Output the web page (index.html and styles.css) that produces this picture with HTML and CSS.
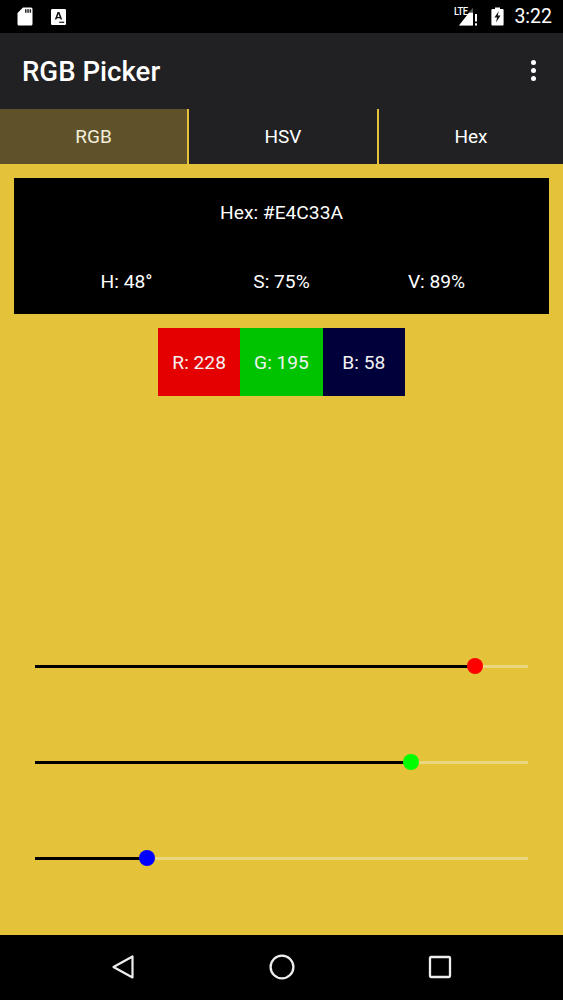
FILE: index.html
```html
<!DOCTYPE html>
<html lang="en">
<head>
<meta charset="utf-8">
<title>RGB Picker</title>
<link rel="stylesheet" href="styles.css">
</head>
<body>
<div class="screen">
  <header class="status">
    <div class="status-left">
      <svg class="ic-sd" viewBox="0 0 16 19"><path d="M6 0.5H14a1.5 1.5 0 0 1 1.5 1.5v15a1.5 1.5 0 0 1-1.5 1.5H2a1.5 1.5 0 0 1-1.5-1.5V6z" fill="#fff"/><path d="M8 2.3h1.5v3.4H8zM10.3 2.3h1.5v3.4h-1.5zM12.6 2.3h1.5v3.4h-1.5z" fill="#222"/></svg>
      <svg class="ic-a" viewBox="0 0 15 16"><rect x="0" y="0" width="15" height="16" rx="1.2" fill="#fff"/><path d="M3.8 10.6 6.6 3h1.8l2.8 7.6H9.6L9.1 9.2H5.9l-.5 1.4zM6.4 7.9h2.2L7.5 4.7z" fill="#111"/><rect x="8.2" y="12.6" width="5" height="1.4" fill="#333"/></svg>
    </div>
    <div class="status-right">
      <div class="signal">
        <span class="lte">LTE</span>
        <svg class="ic-signal" viewBox="0 0 20 19"><path d="M0 18.5 14 0.5V18.5z" fill="#555"/><path d="M0 18.5 10 5.7H14V18.5z" fill="#fff"/><rect x="16" y="7" width="2" height="7.5" fill="#fff"/><rect x="16" y="16.3" width="2" height="2.2" fill="#fff"/></svg>
      </div>
      <svg class="ic-batt" viewBox="0 0 13 19"><path d="M4 0.5h5v1.5h2.6a1 1 0 0 1 1 1v14.5a1 1 0 0 1-1 1H1.4a1 1 0 0 1-1-1V3a1 1 0 0 1 1-1H4z" fill="#fff"/><path d="M7.8 4 3.4 10.6h2.7L5 15.6l4.6-7H6.8z" fill="#111"/></svg>
      <span class="time">3:22</span>
    </div>
  </header>

  <div class="appbar">
    <h1 class="title">RGB Picker</h1>
    <div class="overflow"><i></i><i></i><i></i></div>
  </div>

  <nav class="tabs">
    <div class="tab tab-active">RGB</div>
    <div class="tab">HSV</div>
    <div class="tab">Hex</div>
  </nav>

  <main class="content">
    <section class="panel">
      <div class="hex">Hex: #E4C33A</div>
      <div class="hsv">
        <span>H: 48°</span>
        <span>S: 75%</span>
        <span>V: 89%</span>
      </div>
    </section>

    <section class="swatches">
      <div class="swatch sw-r">R: 228</div>
      <div class="swatch sw-g">G: 195</div>
      <div class="swatch sw-b">B: 58</div>
    </section>

    <section class="sliders">
      <div class="slider">
        <div class="fill" style="width:440px"></div>
        <div class="thumb th-r"></div>
        <div class="rest"></div>
      </div>
      <div class="slider">
        <div class="fill" style="width:376px"></div>
        <div class="thumb th-g"></div>
        <div class="rest"></div>
      </div>
      <div class="slider">
        <div class="fill" style="width:112px"></div>
        <div class="thumb th-b"></div>
        <div class="rest"></div>
      </div>
    </section>
  </main>

  <footer class="navbar">
    <svg class="nav-ic" viewBox="0 0 24 26"><path d="M21.5 2.5v21L2.5 13z" fill="none" stroke="#eee" stroke-width="2.2" stroke-linejoin="round"/></svg>
    <svg class="nav-ic" viewBox="0 0 26 26"><circle cx="13" cy="13" r="11.4" fill="none" stroke="#eee" stroke-width="2.3"/></svg>
    <svg class="nav-ic" viewBox="0 0 24 24"><rect x="2" y="2" width="20" height="20" rx="1" fill="none" stroke="#eee" stroke-width="2.3"/></svg>
  </footer>
</div>
</body>
</html>
```

FILE: styles.css
```css
* { box-sizing: border-box; }
html, body { margin: 0; padding: 0; }
body { font-family: Roboto, "Noto Sans", sans-serif; background: #000; color: #fff; }

.screen { width: 563px; height: 1000px; display: flex; flex-direction: column; overflow: hidden; }

.status { height: 33px; background: #000; display: flex; justify-content: space-between; align-items: center; flex: none; }
.status-left { display: flex; align-items: center; padding-left: 17px; gap: 18px; }
.ic-sd { width: 16px; height: 19px; display: block; }
.ic-a { width: 15px; height: 16px; display: block; }
.status-right { display: flex; align-items: center; padding-right: 11px; }
.signal { position: relative; width: 20px; height: 19px; margin-right: 12px; }
.lte { position: absolute; left: -5px; top: 0; font-size: 11px; font-weight: 500; line-height: 10px; letter-spacing: -0.5px; transform: scaleX(0.85); transform-origin: left top; }
.ic-signal { width: 20px; height: 19px; display: block; }
.ic-batt { width: 13px; height: 19px; display: block; margin-right: 10px; }
.time { font-size: 19.5px; line-height: 22px; }

.appbar { height: 76px; background: #212123; display: flex; align-items: center; justify-content: space-between; padding: 0 27px 0 22px; flex: none; }
.title { margin: 2px 0 0; font-size: 27.6px; font-weight: 500; line-height: 32px; color: #fff; }
.overflow { display: flex; flex-direction: column; gap: 3px; margin-top: -2px; }
.overflow i { display: block; width: 5px; height: 5px; border-radius: 50%; background: #fff; }

.tabs { height: 55px; background: #212123; display: grid; grid-template-columns: 189px 190px 1fr; flex: none; }
.tab { display: flex; align-items: center; justify-content: center; font-size: 19px; border-right: 2px solid #E4C33A; color: #fff; }
.tab:last-child { border-right: 0; }
.tab-active { background: #5F522B; color: #f4efdc; }

.content { flex: 1; background: #E4C33A; padding: 14px 14px 0 14px; display: flex; flex-direction: column; align-items: center; }
.panel { width: 535px; height: 136px; background: #000; display: flex; flex-direction: column; flex: none; }
.hex { font-size: 19.2px; line-height: 22px; text-align: center; padding-top: 24px; }
.hsv { display: grid; grid-template-columns: repeat(3, 155px); justify-content: center; margin-top: 47px; font-size: 19.2px; line-height: 22px; text-align: center; }

.swatches { display: flex; margin-top: 14px; width: 247px; height: 68px; flex: none; }
.swatch { flex: 1; display: flex; align-items: center; justify-content: center; font-size: 19.2px; color: #f2f2f2; }
.sw-r { background: #E40000; }
.sw-g { background: #00C300; }
.sw-b { background: #00003A; }

.sliders { width: 100%; margin-top: 262px; display: flex; flex-direction: column; gap: 80px; padding: 0 21px; }
.slider { height: 16px; display: flex; align-items: center; width: 493px; }
.fill { height: 3px; background: #000; flex: none; }
.rest { height: 3px; flex: 1; background: #EBD680; }
.thumb { width: 16px; height: 16px; border-radius: 50%; flex: none; margin-left: -8px; position: relative; }
.th-r { background: #FF0000; }
.th-g { background: #00FF00; }
.th-b { background: #0000FF; }

.navbar { height: 65px; background: #000; display: flex; align-items: center; flex: none; justify-content: space-between; padding: 0 111px 2px 111px; }
.nav-ic { display: block; }
.nav-ic:nth-child(1) { width: 24px; height: 26px; }
.nav-ic:nth-child(2) { width: 26px; height: 26px; }
.nav-ic:nth-child(3) { width: 24px; height: 24px; }
```
